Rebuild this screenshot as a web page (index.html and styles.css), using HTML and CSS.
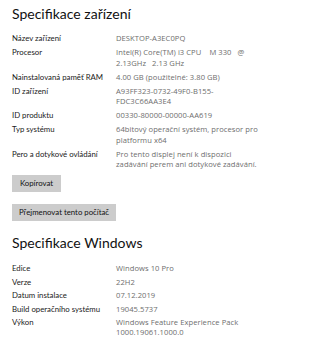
FILE: index.html
```html
<!DOCTYPE html>
<html lang="cs">
<head>
<meta charset="utf-8">
<link rel="stylesheet" href="styles.css">
</head>
<body>
<div class="page">
  <h2 class="title">Specifikace zařízení</h2>
  <dl class="specs specs-device">
    <dt>Název zařízení</dt><dd>DESKTOP-A3EC0PQ</dd>
    <dt>Procesor</dt><dd>Intel(R) Core(TM) i3 CPU&nbsp;&nbsp;&nbsp;&nbsp;M 330&nbsp;&nbsp;&nbsp;@<br>2.13GHz&nbsp;&nbsp;&nbsp;2.13 GHz</dd>
    <dt>Nainstalovaná paměť RAM</dt><dd>4.00 GB (použitelné: 3.80 GB)</dd>
    <dt>ID zařízení</dt><dd>A93FF323-0732-49F0-B155-<br>FDC3C66AA3E4</dd>
    <dt>ID produktu</dt><dd>00330-80000-00000-AA619</dd>
    <dt>Typ systému</dt><dd>64bitový operační systém, procesor pro<br>platformu x64</dd>
    <dt>Pero a dotykové ovládání</dt><dd>Pro tento displej není k dispozici<br>zadávání perem ani dotykové zadávání.</dd>
  </dl>
  <button class="btn btn-copy">Kopírovat</button>
  <button class="btn btn-rename">Přejmenovat tento počítač</button>
  <h2 class="title title-win">Specifikace Windows</h2>
  <dl class="specs specs-win">
    <dt>Edice</dt><dd>Windows 10 Pro</dd>
    <dt>Verze</dt><dd>22H2</dd>
    <dt>Datum instalace</dt><dd>07.12.2019</dd>
    <dt>Build operačního systému</dt><dd>19045.5737</dd>
    <dt>Výkon</dt><dd>Windows Feature Experience Pack<br>1000.19061.1000.0</dd>
  </dl>
</div>
</body>
</html>
```
FILE: styles.css
```css
html, body {
  margin: 0;
  padding: 0;
  background: #fff;
}
.page {
  padding: 5px 12px 0 12px;
  font-family: Lato, "Liberation Sans", sans-serif;
  color: #1f1f1f;
  display: flex;
  flex-direction: column;
  align-items: flex-start;
}
.title {
  margin: 0;
  font-size: 14px;
  font-weight: 400;
  line-height: 18px;
  color: #111;
  white-space: nowrap;
}
.specs {
  margin: 0;
  display: grid;
  grid-template-columns: 104px 1fr;
  row-gap: 3.5px;
  line-height: 10.5px;
  white-space: nowrap;
}
.specs-device {
  margin-top: 10px;
}
.specs-win {
  margin-top: 11.5px;
  row-gap: 3.6px;
  line-height: 10px;
}
.specs dt {
  margin: 0;
  font-size: 7.8px;
  color: #1a1a1a;
}
.specs dd {
  margin: 0;
  font-family: "Open Sans", "Noto Sans", sans-serif;
  font-size: 7.6px;
  letter-spacing: 0.05px;
  color: #6e6e6e;
}
.btn {
  font-family: Lato, "Liberation Sans", sans-serif;
  font-size: 7.8px;
  color: #111;
  background: #cccccc;
  border: none;
  height: 17px;
  padding: 0;
  line-height: 17px;
  white-space: nowrap;
}
.btn-copy {
  margin-top: 5px;
  width: 49px;
}
.btn-rename {
  margin-top: 12px;
  width: 104px;
}
.title-win {
  margin-top: 13px;
}
```
